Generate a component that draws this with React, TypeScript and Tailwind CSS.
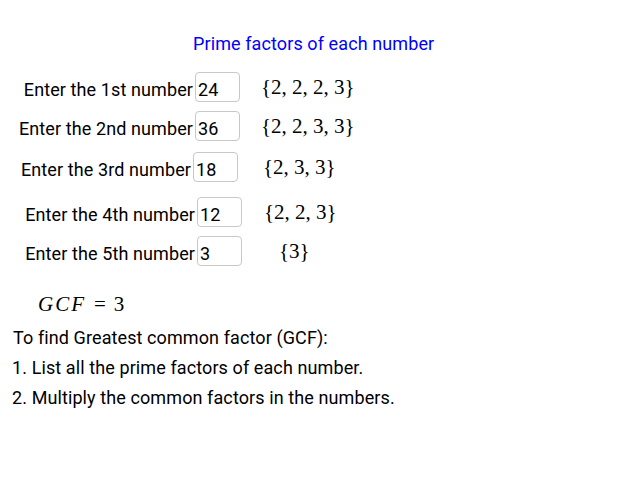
const rows = [
  { label: 'Enter the 1st number', value: '24', set: '{2, 2, 2, 3}', labelW: 'w-[195px]', mt: 'mt-[17px]', setMl: 'ml-[21px]' },
  { label: 'Enter the 2nd number', value: '36', set: '{2, 2, 3, 3}', labelW: 'w-[195px]', mt: 'mt-[9px]', setMl: 'ml-[21px]' },
  { label: 'Enter the 3rd number', value: '18', set: '{2, 3, 3}', labelW: 'w-[193px]', mt: 'mt-[11px]', setMl: 'ml-[25px]' },
  { label: 'Enter the 4th number', value: '12', set: '{2, 2, 3}', labelW: 'w-[197px]', mt: 'mt-[15px]', setMl: 'ml-[22px]' },
  { label: 'Enter the 5th number', value: '3', set: '{3}', labelW: 'w-[197px]', mt: 'mt-[9px]', setMl: 'ml-[37px]' },
];

export default function App() {
  return (
    <div className="w-[630px] h-[500px] bg-white text-black font-['Roboto',sans-serif] text-[18px] tracking-[0.1px] overflow-hidden flex flex-col">
      <div className="mt-[33px] ml-[193px] text-[#0000ff] leading-[22px] whitespace-nowrap">
        Prime factors of each number
      </div>

      {rows.map((row) => (
        <div key={row.label} className={`flex items-stretch h-[30px] ${row.mt}`}>
          <div className={`${row.labelW} text-right pr-[2px] pt-[5px] leading-[25px] whitespace-nowrap`}>
            {row.label}
          </div>
          <div className="w-[45px] h-[30px] border border-[#c8c8c8] rounded-[4px] pl-[2px] pt-[5px] leading-[23px]">
            {row.value}
          </div>
          <div className={`${row.setMl} font-['Liberation_Serif',serif] text-[21px] tracking-normal leading-[30px] whitespace-nowrap`}>
            {row.set}
          </div>
        </div>
      ))}

      <div className="mt-[24px] ml-[38px] font-['Liberation_Serif',serif] text-[21px] tracking-normal leading-[28px] whitespace-nowrap">
        <span className="italic tracking-[2px]">GCF</span>
        <span className="mx-[8px]">=</span>
        <span>3</span>
      </div>
      <div className="mt-[5px] ml-[13px] leading-[30px] whitespace-nowrap">To find Greatest common factor (GCF):</div>
      <div className="ml-[12px] leading-[30px] whitespace-nowrap">1. List all the prime factors of each number.</div>
      <div className="ml-[12px] leading-[30px] whitespace-nowrap">2. Multiply the common factors in the numbers.</div>
    </div>
  );
}
